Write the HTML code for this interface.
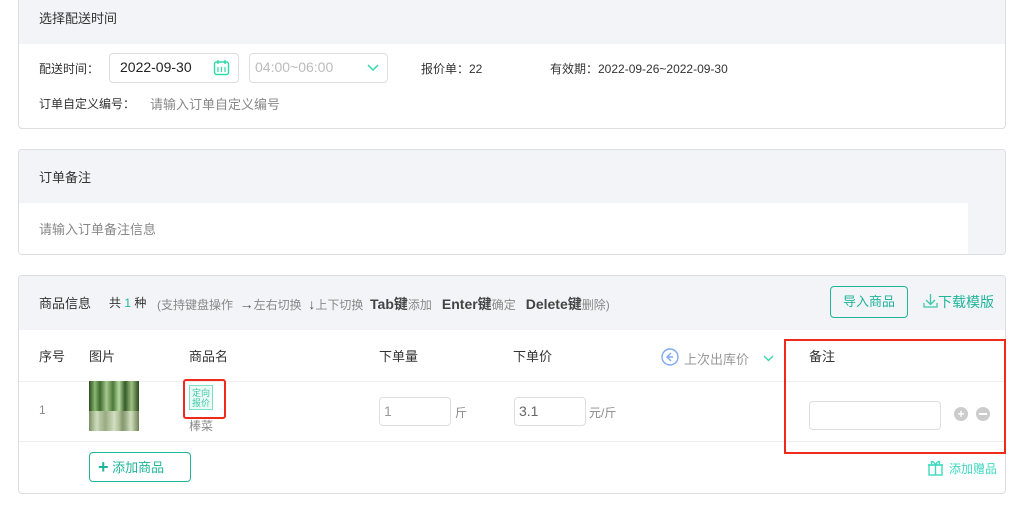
<!DOCTYPE html>
<html><head><meta charset="utf-8"><style>
*{margin:0;padding:0;box-sizing:border-box}
body{width:1015px;height:526px;background:#fff;font-family:"Liberation Sans","Noto Sans CJK SC",sans-serif;font-size:13px;color:#333;position:relative;overflow:hidden}
.a{position:absolute;white-space:nowrap}
.card{position:absolute;left:18px;width:988px;border:1px solid #dcdee2;border-radius:4px;overflow:hidden;background:#fff}
.hd{position:absolute;left:0;right:0;top:0;background:#f3f4f8}
.inp{position:absolute;border:1px solid #dcdee2;border-radius:4px;background:#fff}
.g{color:#888}
</style></head><body>
<div class="card" style="top:-5px;height:134px">
 <div class="hd" style="height:48px"></div>
</div>
<div class="a" style="left:39px;top:8px">选择配送时间</div>
<div class="a" style="left:39px;top:60px;font-size:12px">配送时间：</div>
<div class="inp" style="left:109px;top:53px;width:130px;height:30px"></div>
<div class="a" style="left:120px;top:59px;font-size:14px;color:#222">2022-09-30</div>
<svg class="a" style="left:213px;top:59px" width="17" height="17" viewBox="0 0 17 17"><rect x="1.5" y="3" width="14" height="12.5" rx="2" fill="none" stroke="#2ed8a8" stroke-width="1.4"/><line x1="5" y1="1" x2="5" y2="5" stroke="#2ed8a8" stroke-width="1.4"/><line x1="12" y1="1" x2="12" y2="5" stroke="#2ed8a8" stroke-width="1.4"/><path d="M5 8v5M8.5 8v5M12 8v5" stroke="#2ed8a8" stroke-width="1.2"/></svg>
<div class="inp" style="left:249px;top:53px;width:139px;height:30px"></div>
<div class="a" style="left:255px;top:59px;font-size:14px;color:#bbb">04:00~06:00</div>
<svg class="a" style="left:367px;top:64px" width="12" height="8"><path d="M1 1l5 5 5-5" fill="none" stroke="#2ed8a8" stroke-width="1.5"/></svg>
<div class="a" style="left:421px;top:60px;font-size:12px">报价单：22</div>
<div class="a" style="left:550px;top:60px;font-size:12px">有效期：2022-09-26~2022-09-30</div>
<div class="a" style="left:39px;top:95px;font-size:12px">订单自定义编号：</div>
<div class="a g" style="left:150px;top:94px;font-size:13px">请输入订单自定义编号</div>
<div class="card" style="top:149px;height:106px;background:#f3f4f8">
 <div style="position:absolute;left:0;top:53px;width:949px;height:53px;background:#fff"></div>
</div>
<div class="a" style="left:39px;top:167px">订单备注</div>
<div class="a g" style="left:39px;top:219px">请输入订单备注信息</div>
<div class="card" style="top:275px;height:219px">
 <div class="hd" style="height:54px"></div>
 <div style="position:absolute;left:0;right:0;top:105px;border-top:1px solid #eee"></div>
 <div style="position:absolute;left:0;right:0;top:165px;border-top:1px solid #eee"></div>
</div>
<div class="a" style="left:39px;top:293px">商品信息</div>
<div class="a" style="left:109px;top:294px;font-size:12px">共 <span style="color:#1fb59a">1</span> 种</div>
<div class="a g" style="left:157px;top:294px;font-size:12px">(支持键盘操作 &nbsp;<span style="font-size:14px;color:#555">→</span>左右切换 &nbsp;<span style="font-size:14px;color:#555">↓</span>上下切换 &nbsp;<b style="color:#444;font-size:14px">Tab键</b>添加 &nbsp; <b style="color:#444;font-size:14px">Enter键</b>确定 &nbsp; <b style="color:#444;font-size:14px">Delete键</b>删除)</div>
<div class="a" style="left:830px;top:286px;width:78px;height:32px;border:1px solid #1fb59a;border-radius:4px;color:#1fb59a;text-align:center;line-height:30px">导入商品</div>
<svg class="a" style="left:923px;top:293px" width="15" height="15"><path d="M7.5 1v10M3 7l4.5 4.5L12 7M1 10v4h13v-4" fill="none" stroke="#3fc8a8" stroke-width="1.3"/></svg>
<div class="a" style="left:938px;top:292px;color:#1fb59a;font-size:14px">下载模版</div>
<div class="a" style="left:39px;top:346px">序号</div>
<div class="a" style="left:89px;top:346px">图片</div>
<div class="a" style="left:189px;top:346px">商品名</div>
<div class="a" style="left:379px;top:346px">下单量</div>
<div class="a" style="left:513px;top:346px">下单价</div>
<svg class="a" style="left:661px;top:348px" width="18" height="18"><circle cx="9" cy="9" r="8" fill="none" stroke="#7fa8f0" stroke-width="1.4"/><path d="M10 5L6 9l4 4M6 9h6" fill="none" stroke="#7fa8f0" stroke-width="1.4"/></svg>
<div class="a" style="left:684px;top:349px;color:#999">上次出库价</div>
<svg class="a" style="left:763px;top:355px" width="11" height="7"><path d="M1 1l4.5 4.5L10 1" fill="none" stroke="#2ed8a8" stroke-width="1.3"/></svg>
<div class="a" style="left:809px;top:346px">备注</div>
<div class="a g" style="left:39px;top:403px;font-size:12px">1</div>
<div class="a" style="left:89px;top:381px;width:50px;height:50px;background:linear-gradient(90deg,#2c4a22 0,#8ab870 12%,#3d6a2e 22%,#a8c890 35%,#4a7a3a 48%,#b8d8a0 60%,#355c28 72%,#9ec080 85%,#2c4a22 100%)">
 <div style="position:absolute;left:0;right:0;bottom:0;height:20px;background:linear-gradient(90deg,#8a9a70,#dfe8d0,#9aa880,#e8efd8,#8a9a70,#dde6cc,#7a8a60);opacity:.85"></div></div>
<div class="a" style="left:183px;top:379px;width:43px;height:40px;border:2px solid #f02a1a;border-radius:3px"></div>
<div class="a" style="left:189px;top:385px;width:24px;height:25px;border:1px solid #7ee0c8;background:#eafaf5;font-size:9px;line-height:10px;color:#40c8a8;text-align:center;padding-top:2px">定向<br>报价</div>
<div class="a g" style="left:189px;top:417px;font-size:12px">棒菜</div>
<div class="inp" style="left:379px;top:397px;width:72px;height:29px"></div>
<div class="a" style="left:384px;top:403px;color:#999;font-size:14px">1</div>
<div class="a g" style="left:455px;top:404px;font-size:12px">斤</div>
<div class="inp" style="left:514px;top:397px;width:72px;height:29px"></div>
<div class="a" style="left:519px;top:403px;color:#666;font-size:14px">3.1</div>
<div class="a g" style="left:589px;top:404px;font-size:12px">元/斤</div>
<div class="a" style="left:784px;top:339px;width:222px;height:115px;border:2px solid #f02a1a"></div>
<div class="inp" style="left:809px;top:401px;width:132px;height:29px"></div>
<div class="a" style="left:954px;top:407px;width:14px;height:14px;border-radius:50%;background:#ccc;color:#fff;font-size:12px;line-height:14px;text-align:center;font-weight:bold">+</div>
<div class="a" style="left:976px;top:407px;width:14px;height:14px;border-radius:50%;background:#ccc"><div style="position:absolute;left:3px;top:6px;width:8px;height:2px;background:#fff"></div></div>
<div class="a" style="left:89px;top:452px;width:102px;height:30px;border:1px solid #1fb59a;border-radius:4px;color:#1fb59a;line-height:28px;padding-left:8px;font-size:13px"><b style="font-size:18px;vertical-align:-1px">+</b> 添加商品</div>
<svg class="a" style="left:927px;top:459px" width="17" height="17"><rect x="2" y="6" width="13" height="10" fill="none" stroke="#3fd8c0" stroke-width="1.4"/><path d="M1 6h15M8.5 6v10M8.5 6C6 1 3 2 5 5M8.5 6C11 1 14 2 12 5" fill="none" stroke="#3fd8c0" stroke-width="1.4"/></svg>
<div class="a" style="left:949px;top:460px;color:#3fd8c0;font-size:12px">添加赠品</div>
</body></html>
